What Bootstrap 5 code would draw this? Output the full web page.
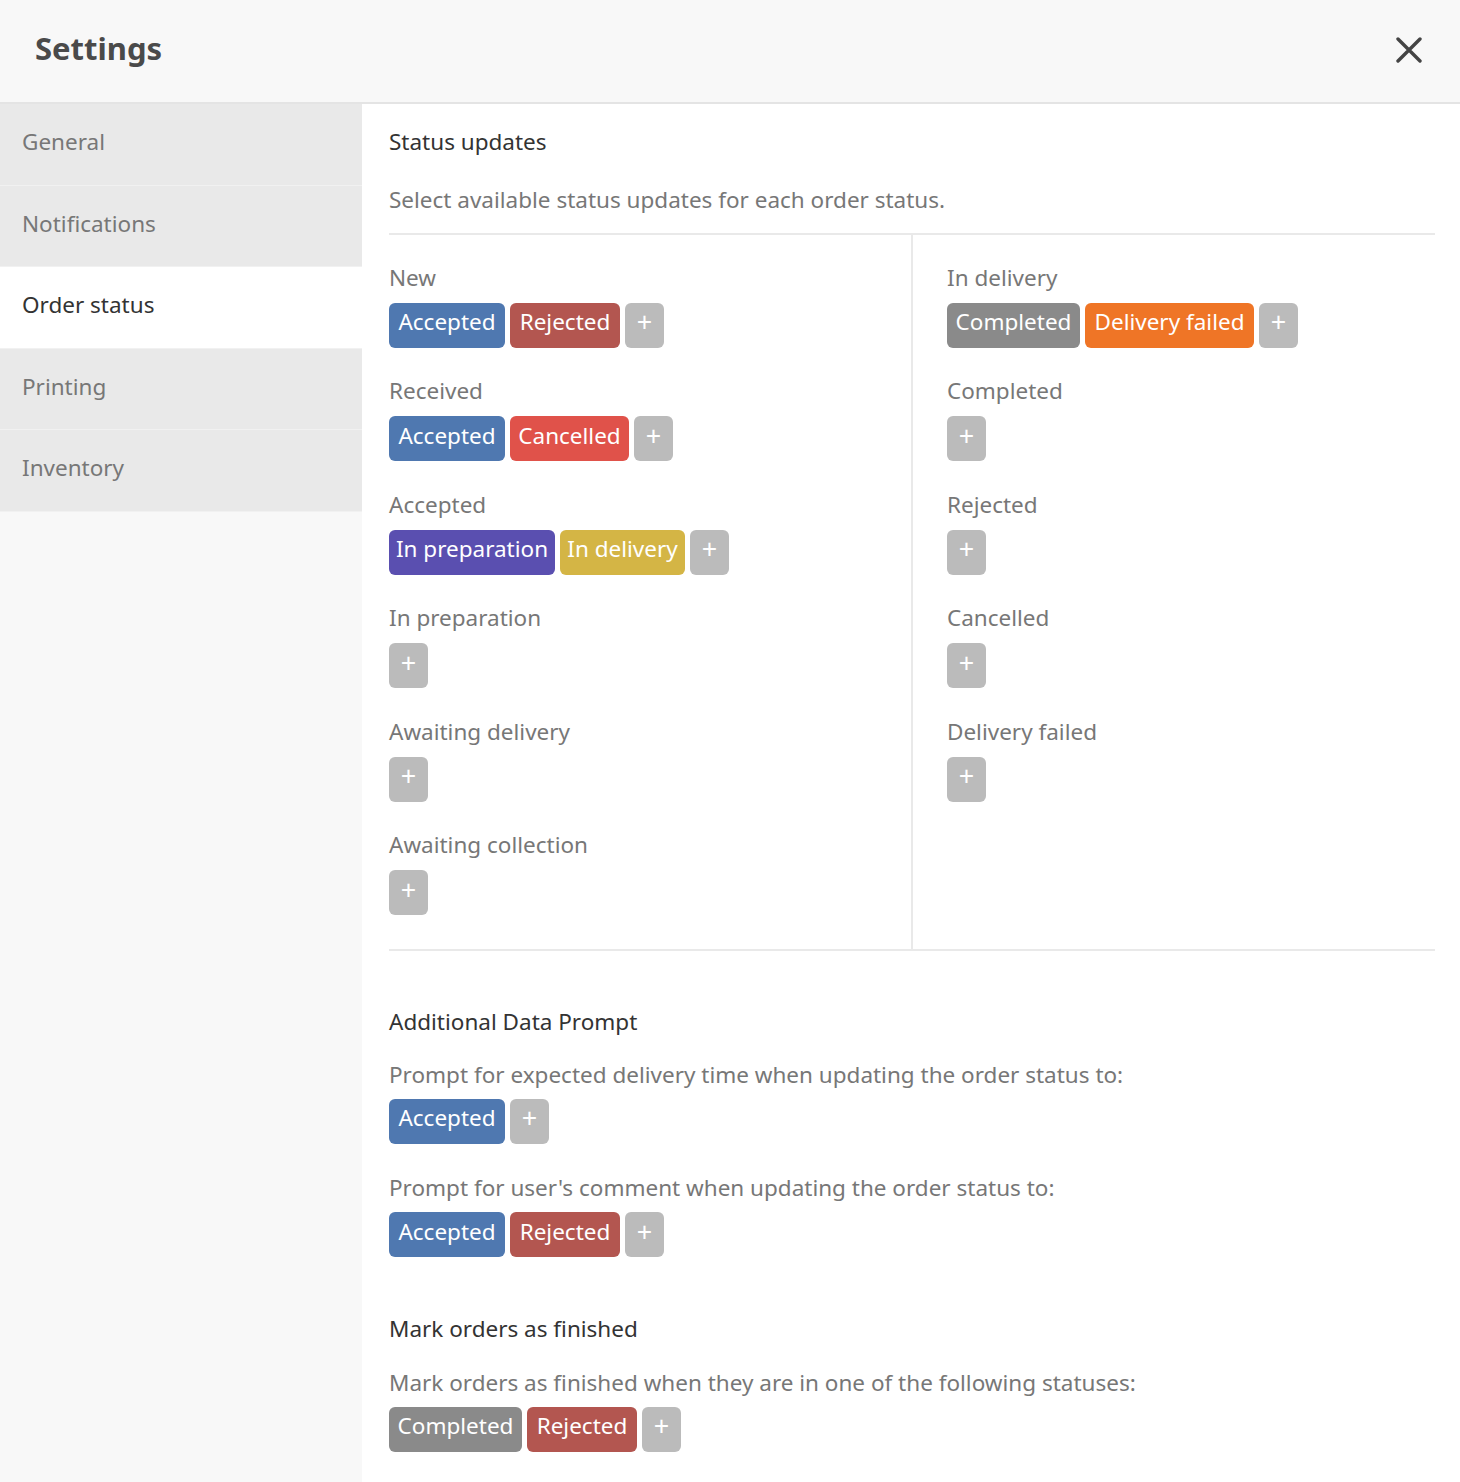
<!DOCTYPE html>
<html lang="en">
<head>
    <meta charset="UTF-8">
    <title>Settings</title>
    <link href="https://cdn.jsdelivr.net/npm/bootstrap@5.3.0/dist/css/bootstrap.min.css" rel="stylesheet">
    <style>
        body { font-family: "Noto Sans", "Open Sans", sans-serif; font-size: 22.5px; color: #777; background: #fff; }
        .settings-header { height: 104px; background: #f8f8f8; border-bottom: 2px solid #e4e4e4; padding: 0 38px 2px 35px; }
        .settings-title { font-size: 31px; font-weight: 700; color: #4a4a4a; margin: 0 0 2px; }
        .close-btn { border: 0; background: none; padding: 0; line-height: 0; }
        .settings-body { height: 1378px; }
        .sidebar { width: 362px; background: #f8f8f8; flex-shrink: 0; }
        .side-link { display: flex; align-items: center; height: 81.5px; padding: 0 0 4px 22px; background: #e9e9e9; color: #777; text-decoration: none; border-bottom: 1px solid #f1f1f1; }
        .side-link.active { background: #fff; color: #333; }
        .main { padding: 0 25px 0 27px; }
        .section-title { font-size: 22.5px; color: #333; margin: 0; line-height: 32px; font-weight: 400; }
        .section-first { padding-top: 22px; }
        .section-second { margin-top: 55px; }
        .section-third { margin-top: 27px; }
        .section-note { margin: 25px 0 16px; }
        .status-grid { border-top: 2px solid #e9e9e9; border-bottom: 2px solid #e9e9e9; height: 718px; }
        .status-col { width: 524px; border-right: 2px solid #e9e9e9; padding-top: 27px; }
        .status-col + .status-col { width: auto; border-right: 0; padding-left: 34px; }
        .status-row { height: 113.5px; }
        .status-label { line-height: 32px; height: 41px; }
        .prompt-first { margin-top: 21px; }
        .prompt-mark { margin-top: 22px; }
        .prompt-row .status-label { height: 40px; }
        .status-badges { gap: 5px; }
        .tag { display: inline-flex; align-items: center; justify-content: center; height: 45px; padding: 0 0 6px; border-radius: 6px; color: #fff; font-size: 22.5px; white-space: nowrap; }
        .tag-add { background: #bbb; width: 39px; font-size: 27px; }
        .tag-accepted { background: #4f78b0; width: 116px; }
        .tag-rejected { background: #b35650; width: 110px; }
        .tag-cancelled { background: #e0524a; width: 119px; }
        .tag-preparation { background: #5a4fb0; width: 166px; }
        .tag-delivery { background: #d4b545; width: 125px; }
        .tag-completed { background: #8a8a8a; width: 133px; }
        .tag-failed { background: #ef7526; width: 169px; }
    </style>
</head>
<body>
    <div class="settings-header d-flex align-items-center justify-content-between">
        <h1 class="settings-title">Settings</h1>
        <button class="close-btn" type="button" aria-label="Close">
            <svg width="26" height="26" viewBox="0 0 26 26"><path d="M2 2L24 24M24 2L2 24" stroke="#444" stroke-width="3.4" stroke-linecap="round"/></svg>
        </button>
    </div>
    <div class="settings-body d-flex">
        <nav class="sidebar">
            <a class="side-link" href="#">General</a>
            <a class="side-link" href="#">Notifications</a>
            <a class="side-link active" href="#">Order status</a>
            <a class="side-link" href="#">Printing</a>
            <a class="side-link" href="#">Inventory</a>
        </nav>
        <div class="main flex-grow-1" id="main"></div>
    </div>
    <script src="https://cdn.jsdelivr.net/npm/bootstrap@5.3.0/dist/js/bootstrap.bundle.min.js"></script>
    <script>
        const tagClass = {
            'Accepted': 'tag-accepted', 'Rejected': 'tag-rejected', 'Cancelled': 'tag-cancelled',
            'In preparation': 'tag-preparation', 'In delivery': 'tag-delivery',
            'Completed': 'tag-completed', 'Delivery failed': 'tag-failed'
        };

        function tags(list) {
            return `<div class="status-badges d-flex">` +
                list.map(t => `<span class="tag ${tagClass[t]}">${t}</span>`).join('') +
                `<span class="tag tag-add">+</span></div>`;
        }

        function statusRow(row) {
            return `<div class="status-row"><div class="status-label">${row[0]}</div>${tags(row[1])}</div>`;
        }

        const left = [['New', ['Accepted', 'Rejected']], ['Received', ['Accepted', 'Cancelled']],
            ['Accepted', ['In preparation', 'In delivery']], ['In preparation', []],
            ['Awaiting delivery', []], ['Awaiting collection', []]];
        const right = [['In delivery', ['Completed', 'Delivery failed']], ['Completed', []], ['Rejected', []],
            ['Cancelled', []], ['Delivery failed', []]];

        document.getElementById('main').innerHTML = `
            <h2 class="section-title section-first">Status updates</h2>
            <p class="section-note">Select available status updates for each order status.</p>
            <div class="status-grid d-flex">
                <div class="status-col">${left.map(statusRow).join('')}</div>
                <div class="status-col">${right.map(statusRow).join('')}</div>
            </div>
            <h2 class="section-title section-second">Additional Data Prompt</h2>
            <div class="status-row prompt-row prompt-first"><div class="status-label">Prompt for expected delivery time when updating the order status to:</div>${tags(['Accepted'])}</div>
            <div class="status-row prompt-row"><div class="status-label">Prompt for user's comment when updating the order status to:</div>${tags(['Accepted', 'Rejected'])}</div>
            <h2 class="section-title section-third">Mark orders as finished</h2>
            <div class="status-row prompt-row prompt-mark"><div class="status-label">Mark orders as finished when they are in one of the following statuses:</div>${tags(['Completed', 'Rejected'])}</div>
        `;
    </script>
</body>
</html>
